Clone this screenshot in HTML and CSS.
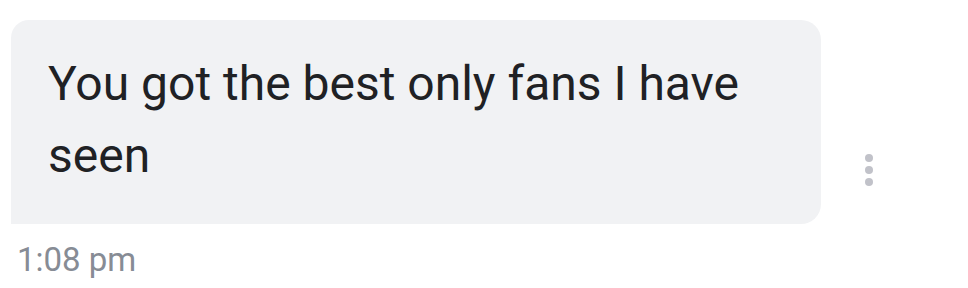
FILE: index.html
```html
<!DOCTYPE html>
<html>
<head>
<meta charset="utf-8">
<link rel="stylesheet" href="styles.css">
</head>
<body>
<div class="msg">
  <div class="row">
    <div class="bubble">You got the best only fans I have seen</div>
    <div class="more" aria-label="More options">
      <span class="dot"></span><span class="dot"></span><span class="dot"></span>
    </div>
  </div>
  <div class="time">1:08 pm</div>
</div>
</body>
</html>
```
FILE: styles.css
```css
html, body {
  margin: 0;
  padding: 0;
  background: #ffffff;
}
.msg {
  padding-top: 20px;
  font-family: Roboto, "Noto Sans", sans-serif;
}
.row {
  display: flex;
  align-items: flex-end;
}
.bubble {
  margin-left: 11px;
  width: 810px;
  box-sizing: border-box;
  padding: 28px 37px 32px 37px;
  background: #f1f2f4;
  border-radius: 18px 20px 20px 0;
  color: #202124;
  font-size: 48px;
  line-height: 72px;
}
.more {
  margin-left: 44px;
  margin-bottom: 38px;
  display: flex;
  flex-direction: column;
  gap: 4px;
}
.dot {
  width: 8px;
  height: 8px;
  border-radius: 50%;
  background: #c1c2c9;
}
.time {
  margin-top: 16px;
  margin-left: 17px;
  font-size: 33px;
  line-height: 40px;
  color: #878c95;
}
```
